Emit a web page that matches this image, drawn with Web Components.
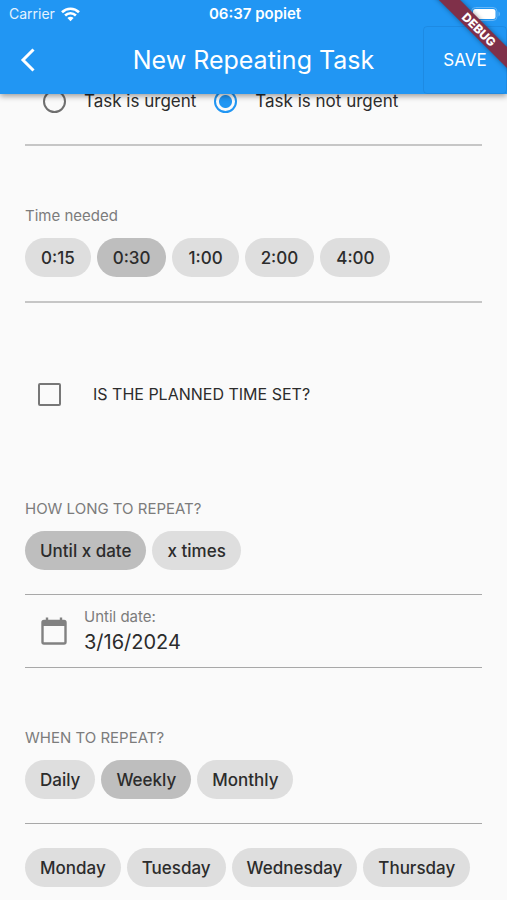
<!DOCTYPE html>
<html lang="en">
<head>
<meta charset="utf-8">
<meta name="viewport" content="width=device-width, initial-scale=1">
<title>New Repeating Task</title>
<style>
  body { margin: 0; background: #fafafa; font-family: Inter, "Liberation Sans", sans-serif; color: #2c2c2c; }
</style>
</head>
<body>
<task-screen>
  <status-bar slot="top" carrier="Carrier" clock="06:37 popiet"></status-bar>
  <nav-bar slot="top">New Repeating Task</nav-bar>
  <urgency-choice></urgency-choice>
  <chip-group class="time" label="Time needed" options="0:15|0:30|1:00|2:00|4:00" selected="0:30"></chip-group>
  <check-row>IS THE PLANNED TIME SET?</check-row>
  <chip-group label="HOW LONG TO REPEAT?" options="Until x date|x times" selected="Until x date"></chip-group>
  <date-field label="Until date:" value="3/16/2024"></date-field>
  <chip-group label="WHEN TO REPEAT?" options="Daily|Weekly|Monthly" selected="Weekly"></chip-group>
  <chip-group nolabel label="Days" options="Monday|Tuesday|Wednesday|Thursday"></chip-group>
</task-screen>

<script>
const define = (name, render) => customElements.define(name, class extends HTMLElement {
  connectedCallback() {
    if (!this.shadowRoot) this.attachShadow({ mode: 'open' }).innerHTML = render(this);
  }
});

define('task-screen', () => `
  <style>
    :host { display: flex; flex-direction: column; height: 100vh; position: relative; overflow: hidden; }
    header { background: #2196f3; color: #fff; position: relative; z-index: 1; flex: none;
      box-shadow: 0 2px 6px rgba(0,0,0,.4); }
    main { flex: 1; padding: 0 25px; overflow: hidden; margin-top: -12px; }
    ::slotted(chip-group.time) { --line: #c6c6c6; --weight: 2px; --chip-pad: 16px; }
  </style>
  <header><slot name="top"></slot></header>
  <main><slot></slot></main>
  <debug-ribbon></debug-ribbon>`);

define('status-bar', el => `
  <style>
    :host { display: grid; grid-template-columns: 1fr auto 1fr; align-items: center; height: 24px;
      padding: 2px 6px 0 9px; font-size: 14px; line-height: 18px; }
    .left { display: flex; align-items: center; gap: 6px; color: #e4f2fe; }
    b { font-size: 15px; font-weight: 600; }
    svg { display: block; }
    .battery { justify-self: end; }
  </style>
  <span class="left">${el.getAttribute('carrier')}
    <svg width="19" height="15" viewBox="0 0 19 15" fill="none" stroke="#fff" stroke-width="2.6">
      <path d="M1 5.3C5.8.6 13.2.6 18 5.3M4.1 8.5c3.1-3 7.7-3 10.8 0"/>
      <path d="M6.4 10.9c1.8-1.7 4.4-1.7 6.2 0L9.5 14.2z" fill="#fff" stroke="none"/>
    </svg>
  </span>
  <b>${el.getAttribute('clock')}</b>
  <svg class="battery" width="30" height="14" viewBox="0 0 30 14">
    <rect x=".5" y=".5" width="25.500" height="13" rx="4" fill="none" stroke="#64b5f6"/>
    <rect x="2" y="2" width="22.500" height="10" rx="2.500" fill="#fff"/>
    <path d="M27.500 4.500c2 .8 2 4.200 0 5z" fill="#64b5f6"/>
  </svg>`);

define('nav-bar', () => `
  <style>
    :host { display: grid; grid-template-columns: 84px 1fr 84px; height: 68px; }
    button { font: inherit; color: inherit; background: none; border: 0; padding: 0; margin: 0; }
    .back { display: flex; align-items: center; padding-left: 20px; }
    h1 { margin: 0; align-self: center; text-align: center; font-size: 25px; font-weight: 400; line-height: 30px; white-space: nowrap; }
    .save { font-size: 17px; border: 1px solid rgba(0,40,90,.1); border-radius: 4px; }
  </style>
  <button class="back" aria-label="Back">
    <svg width="16" height="24" viewBox="0 0 16 24" fill="none" stroke="#fff" stroke-width="3"><path d="M13.500 1.500 3 12l10.500 10.500"/></svg>
  </button>
  <h1><slot></slot></h1>
  <button class="save">SAVE</button>`);

define('debug-ribbon', () => `
  <style>
    :host { position: absolute; top: 0; right: 0; width: 90px; height: 90px; overflow: hidden; z-index: 2; pointer-events: none; }
    span { position: absolute; top: 22px; right: -42px; width: 140px; height: 15px; line-height: 15px; text-align: center;
      transform: rotate(45deg); background: #7f3049; color: #fff; font-size: 12px; font-weight: 800;
      box-shadow: 0 0 5px rgba(0,0,0,.4); }
  </style>
  <span>DEBUG</span>`);

define('urgency-choice', () => `
  <style>
    :host { display: block; height: 62px; border-bottom: 2px solid #c6c6c6; }
    fieldset { border: 0; margin: 0; padding: 0 0 0 18px; display: flex; height: 38px; align-items: center; gap: 18px; }
    label { display: flex; align-items: center; gap: 18px; font-size: 17px; line-height: 22px; white-space: nowrap; }
    input { appearance: none; margin: 0; width: 23px; height: 23px; border: 2px solid #6f6f6f; border-radius: 50%; flex: none; }
    input:checked { border-color: #2196f3; background: radial-gradient(circle, #2196f3 6px, transparent 7px); }
  </style>
  <fieldset aria-label="Urgency">
    <label><input type="radio" name="u">Task is urgent</label>
    <label><input type="radio" name="u" checked>Task is not urgent</label>
  </fieldset>`);

define('chip-group', el => {
  const bare = el.hasAttribute('nolabel');
  const label = el.getAttribute('label');
  const chips = el.getAttribute('options').split('|').map(o =>
    `<button aria-pressed="${o === el.getAttribute('selected')}">${o}</button>`).join('');
  return `
  <style>
    :host { display: block; padding-top: ${bare ? 24 : 60}px; }
    :host(:not([nolabel])) { border-bottom: var(--weight, 1px) solid var(--line, #a8a8a8); padding-bottom: 24px; }
    p { margin: 0 0 12px; font-size: 15px; line-height: 20px; color: #7c7c7c; }
    div { display: flex; gap: 6px; }
    button { font: inherit; font-size: 17px; font-weight: 500; color: #2c2c2c; height: 39px; padding: 0 var(--chip-pad, 15px);
      border: 0; border-radius: 20px; background: #dedede; white-space: nowrap; }
    button[aria-pressed="true"] { background: #bebebe; }
  </style>
  ${bare ? '' : `<p>${label}</p>`}
  <div role="group" aria-label="${label}">${chips}</div>`;
});

define('check-row', () => `
  <style>
    :host { display: block; padding: 71px 0 25px 13px; }
    label { display: flex; align-items: center; gap: 32px; height: 40px; font-size: 16px; line-height: 20px; }
    input { appearance: none; margin: 0; width: 23px; height: 23px; border: 2px solid #777; border-radius: 2px; flex: none; }
  </style>
  <label><input type="checkbox"><slot></slot></label>`);

define('date-field', el => `
  <style>
    :host { display: block; border-bottom: 1px solid #a8a8a8; }
    label { display: grid; grid-template-columns: 26px 1fr; column-gap: 17px; align-items: center; padding: 11px 0 12px 16px; height: 49px; }
    svg { grid-row: span 2; }
    span { font-size: 15px; line-height: 22px; color: #7c7c7c; }
    input { font: inherit; font-size: 20px; line-height: 26px; height: 26px; color: #2c2c2c; border: 0; padding: 0; margin: 0; background: none; width: 100%; }
  </style>
  <label>
    <svg width="26" height="28" viewBox="0 0 26 28" fill="none" stroke="#818181">
      <rect x="1.500" y="4" width="23" height="22.500" rx="1.500" stroke-width="2.400"/>
      <path d="M1 6.500h24" stroke-width="5"/><path d="M6 .5v5M20 .5v5" stroke-width="2.400"/>
    </svg>
    <span>${el.getAttribute('label')}</span>
    <input type="text" value="${el.getAttribute('value')}">
  </label>`);
</script>
</body>
</html>
